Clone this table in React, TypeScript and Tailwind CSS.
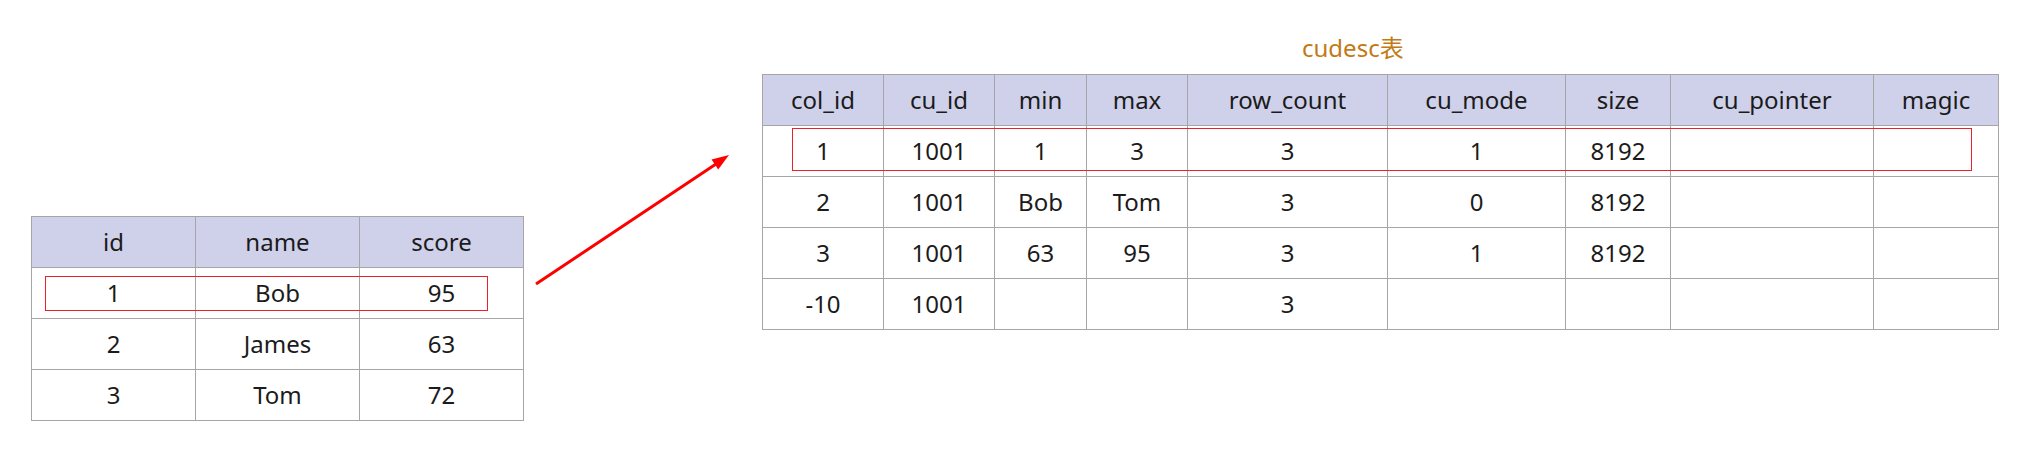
import React from "react";

const leftHead = ["id", "name", "score"];
const leftRows = [
  ["1", "Bob", "95"],
  ["2", "James", "63"],
  ["3", "Tom", "72"],
];

const rightHead = ["col_id", "cu_id", "min", "max", "row_count", "cu_mode", "size", "cu_pointer", "magic"];
const rightRows = [
  ["1", "1001", "1", "3", "3", "1", "8192", "", ""],
  ["2", "1001", "Bob", "Tom", "3", "0", "8192", "", ""],
  ["3", "1001", "63", "95", "3", "1", "8192", "", ""],
  ["-10", "1001", "", "", "3", "", "", "", ""],
];

function Cell({ text, head }: { text: string; head?: boolean }) {
  return (
    <div
      className={
        "h-[51px] flex items-center justify-center border-r border-b border-[#a6a6a6] text-[24px] text-[#1b1b1b] " +
        (head ? "bg-[#cfd1ea]" : "bg-white")
      }
    >
      {text}
    </div>
  );
}

export default function App() {
  return (
    <div
      className="relative w-[2020px] h-[451px] bg-white overflow-hidden"
      style={{ fontFamily: '"Noto Sans", "Noto Sans CJK SC", sans-serif' }}
    >
      <div className="flex items-start">
        <div className="ml-[31px] mt-[216px] grid grid-cols-[164px_164px_164px] border-l border-t border-[#a6a6a6]">
          {leftHead.map((h, i) => (
            <Cell key={"lh" + i} text={h} head />
          ))}
          {leftRows.map((r, ri) =>
            r.map((c, ci) => <Cell key={"l" + ri + "-" + ci} text={c} />)
          )}
        </div>

        <div className="ml-[238px] pt-[32px] flex flex-col">
          <div className="h-[32px] leading-[32px] mb-[10px] pl-[540px] text-[24px] text-[#c27a16] whitespace-nowrap">
            cudesc表
          </div>
          <div className="grid grid-cols-[121px_111px_92px_101px_200px_178px_105px_203px_125px] border-l border-t border-[#a6a6a6]">
            {rightHead.map((h, i) => (
              <Cell key={"rh" + i} text={h} head />
            ))}
            {rightRows.map((r, ri) =>
              r.map((c, ci) => <Cell key={"r" + ri + "-" + ci} text={c} />)
            )}
          </div>
        </div>
      </div>

      <div className="absolute left-[45px] top-[276px] w-[443px] h-[35px] border border-[#e8212b]" />
      <div className="absolute left-[792px] top-[128px] w-[1180px] h-[43px] border border-[#e8212b]" />

      <svg className="absolute left-0 top-0" width="2020" height="451" viewBox="0 0 2020 451">
        <line x1="536" y1="284" x2="716" y2="164" stroke="#ff0000" strokeWidth="3" />
        <polygon points="729,155 711.6,159.4 718.2,169.4" fill="#ff0000" />
      </svg>
    </div>
  );
}
